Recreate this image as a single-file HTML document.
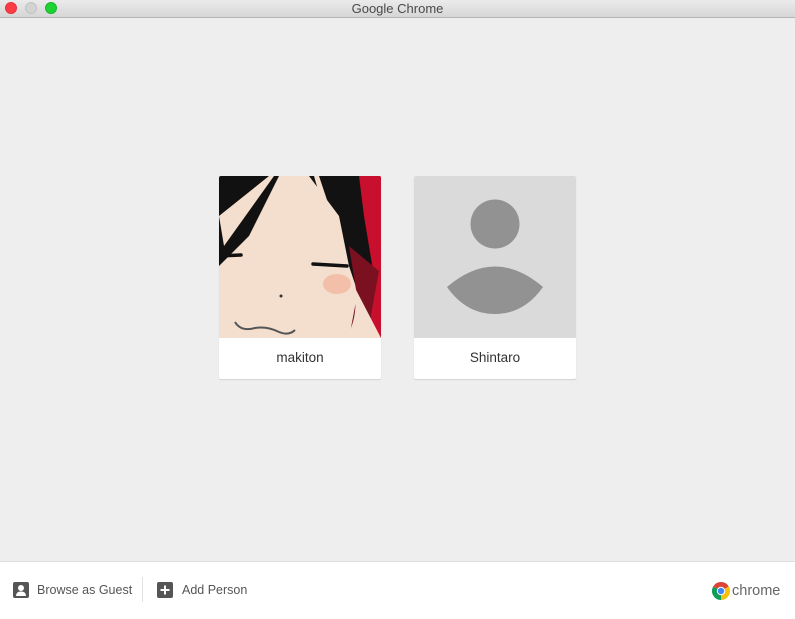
<!DOCTYPE html>
<html><head><meta charset="utf-8"><style>
*{margin:0;padding:0;box-sizing:border-box}
body{width:795px;height:619px;overflow:hidden;background:#eeeeee;font-family:"Liberation Sans",sans-serif;position:relative}
.tb{position:absolute;left:0;top:0;width:795px;height:18px;background:linear-gradient(#ebebeb,#d6d6d6);border-bottom:1px solid #b4b4b4;text-align:center;font-size:13px;line-height:17px;color:#4a4a4a}
.dot{position:absolute;top:2px;width:12px;height:12px;border-radius:50%}
.card{position:absolute;top:176px;width:162px;height:203px;background:#fff;border-radius:2px;box-shadow:0 1px 1px rgba(0,0,0,.12);overflow:hidden}
.card .img{width:162px;height:162px;display:block}
.card .nm{text-align:center;font-size:13.5px;color:#333;line-height:40px;height:41px}
.foot{position:absolute;left:0;top:561px;width:795px;height:58px;background:#fff;border-top:1px solid #e0e0e0}
.fi{position:absolute;top:20px;font-size:12.5px;color:#555;line-height:16px}
.ic{position:absolute;width:16px;height:16px;background:#555;border-radius:2px}
</style></head><body>
<div class="tb">Google Chrome
<div class="dot" style="left:5px;background:#fc3c44;border:1px solid #e0353c"></div>
<div class="dot" style="left:25px;background:#d3d3d3;border:1px solid #c2c2c2"></div>
<div class="dot" style="left:45px;background:#1ed233;border:1px solid #17b52b"></div>
</div>

<div class="card" style="left:219px">
<svg class="img" viewBox="0 0 162 162">
<rect width="162" height="162" fill="#f4dfcf"/>
<path d="M0 0H60L30 60 L10 80 L0 90Z" fill="#111"/>
<path d="M0 40 L50 0 L55 0 L5 70Z" fill="#f4dfcf"/>
<path d="M90 0H162V162H135L140 120 130 90 120 40 Z" fill="#121212"/>
<path d="M100 0 L120 60 L112 60 L95 0Z" fill="#f4dfcf"/>
<path d="M140 0H162V162H150L155 100 145 40Z" fill="#c8102e"/>
<path d="M130 70 L160 95 L150 150 L140 162 L130 162 L138 120Z" fill="#7a1020"/>
<path d="M0 130 Q60 175 128 160 Q140 140 135 110 L162 162H0Z" fill="#f4dfcf"/>
<ellipse cx="118" cy="108" rx="14" ry="10" fill="#f2b79e" opacity=".8"/>
<path d="M94 88 L128 90" stroke="#111" stroke-width="3.5" stroke-linecap="round"/>
<path d="M0 80 L22 79" stroke="#111" stroke-width="3.5" stroke-linecap="round"/>
<circle cx="62" cy="120" r="1.5" fill="#333"/>
<path d="M16 146 Q22 156 36 152 Q48 150 60 156 Q70 160 76 154" stroke="#555" stroke-width="2" fill="none"/>
</svg>
<div class="nm">makiton</div></div>

<div class="card" style="left:414px">
<svg class="img" viewBox="0 0 162 162">
<rect width="162" height="162" fill="#dadada"/>
<circle cx="81" cy="48" r="24.5" fill="#929292"/>
<path d="M33 111 Q81 70 129 111 Q110 138 81 138 Q52 138 33 111Z" fill="#929292"/>
</svg>
<div class="nm">Shintaro</div></div>

<div class="foot">
<div class="ic" style="left:13px;top:20px"><svg width="16" height="16" viewBox="0 0 16 16"><circle cx="8" cy="6" r="3" fill="#fff"/><path d="M3 14 Q3 9.5 8 9.5 Q13 9.5 13 14Z" fill="#fff"/></svg></div>
<div class="fi" style="left:37px">Browse as Guest</div>
<div style="position:absolute;left:142px;top:15px;width:1px;height:25px;background:#e2e2e2"></div>
<div class="ic" style="left:157px;top:20px"><svg width="16" height="16" viewBox="0 0 16 16"><path d="M8 3.5V12.5M3.5 8H12.5" stroke="#fff" stroke-width="2"/></svg></div>
<div class="fi" style="left:182px">Add Person</div>
<svg style="position:absolute;left:712px;top:20px" width="18" height="18" viewBox="0 0 18 18">
<path d="M9 9 L1.2 4.5 A9 9 0 0 1 16.8 4.5Z" fill="#db4437"/>
<path d="M9 9 L16.8 4.5 A9 9 0 0 1 9 18Z" fill="#f4c20d"/>
<path d="M9 9 L9 18 A9 9 0 0 1 1.2 4.5Z" fill="#0f9d58"/>
<circle cx="9" cy="9" r="4.2" fill="#fff"/><circle cx="9" cy="9" r="3.2" fill="#4285f4"/>
</svg>
<div class="fi" style="left:732px;top:21px;font-size:14.5px;color:#666">chrome</div>
</div>
</body></html>
